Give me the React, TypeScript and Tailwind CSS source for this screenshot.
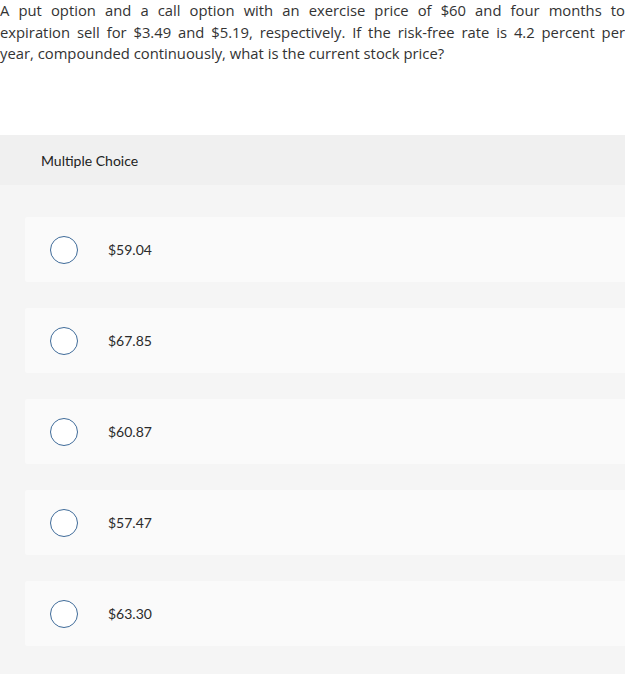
const choices = ['$59.04', '$67.85', '$60.87', '$57.47', '$63.30']

const questionLines = [
  'A put option and a call option with an exercise price of $60 and four months to',
  'expiration sell for $3.49 and $5.19, respectively. If the risk-free rate is 4.2 percent per',
]

export default function App() {
  return (
    <div className="w-[625px] min-h-[674px] bg-[#f5f5f5] font-['Open_Sans','Lato',sans-serif] text-[#333]">
      {/* Question */}
      <div className="bg-white h-[135px]">
        <div className="text-[14.8px] leading-[21.5px] text-[#333]">
          {questionLines.map((l) => (
            <div key={l} className="text-justify [text-align-last:justify] whitespace-nowrap">
              {l}
            </div>
          ))}
          <div>year, compounded continuously, what is the current stock price?</div>
        </div>
      </div>

      {/* Header */}
      <div className="h-[50px] bg-[#f0f0f0] flex items-center pl-[41px] text-[14px] font-['Lato',sans-serif] text-[#222]">
        Multiple Choice
      </div>

      {/* Choices */}
      <div className="pt-[32px] pl-[25px] flex flex-col gap-[26px]">
        {choices.map((c) => (
          <div key={c} className="h-[65px] bg-[#fafafa] rounded-l-[2px] flex items-center pl-[25px]">
            <span className="w-[28px] h-[28px] rounded-full border-[1.5px] border-[#3f6b99] bg-white shrink-0" />
            <span className="ml-[30px] text-[14px] font-['Lato',sans-serif] text-[#2b2b2b]">{c}</span>
          </div>
        ))}
      </div>
    </div>
  )
}
